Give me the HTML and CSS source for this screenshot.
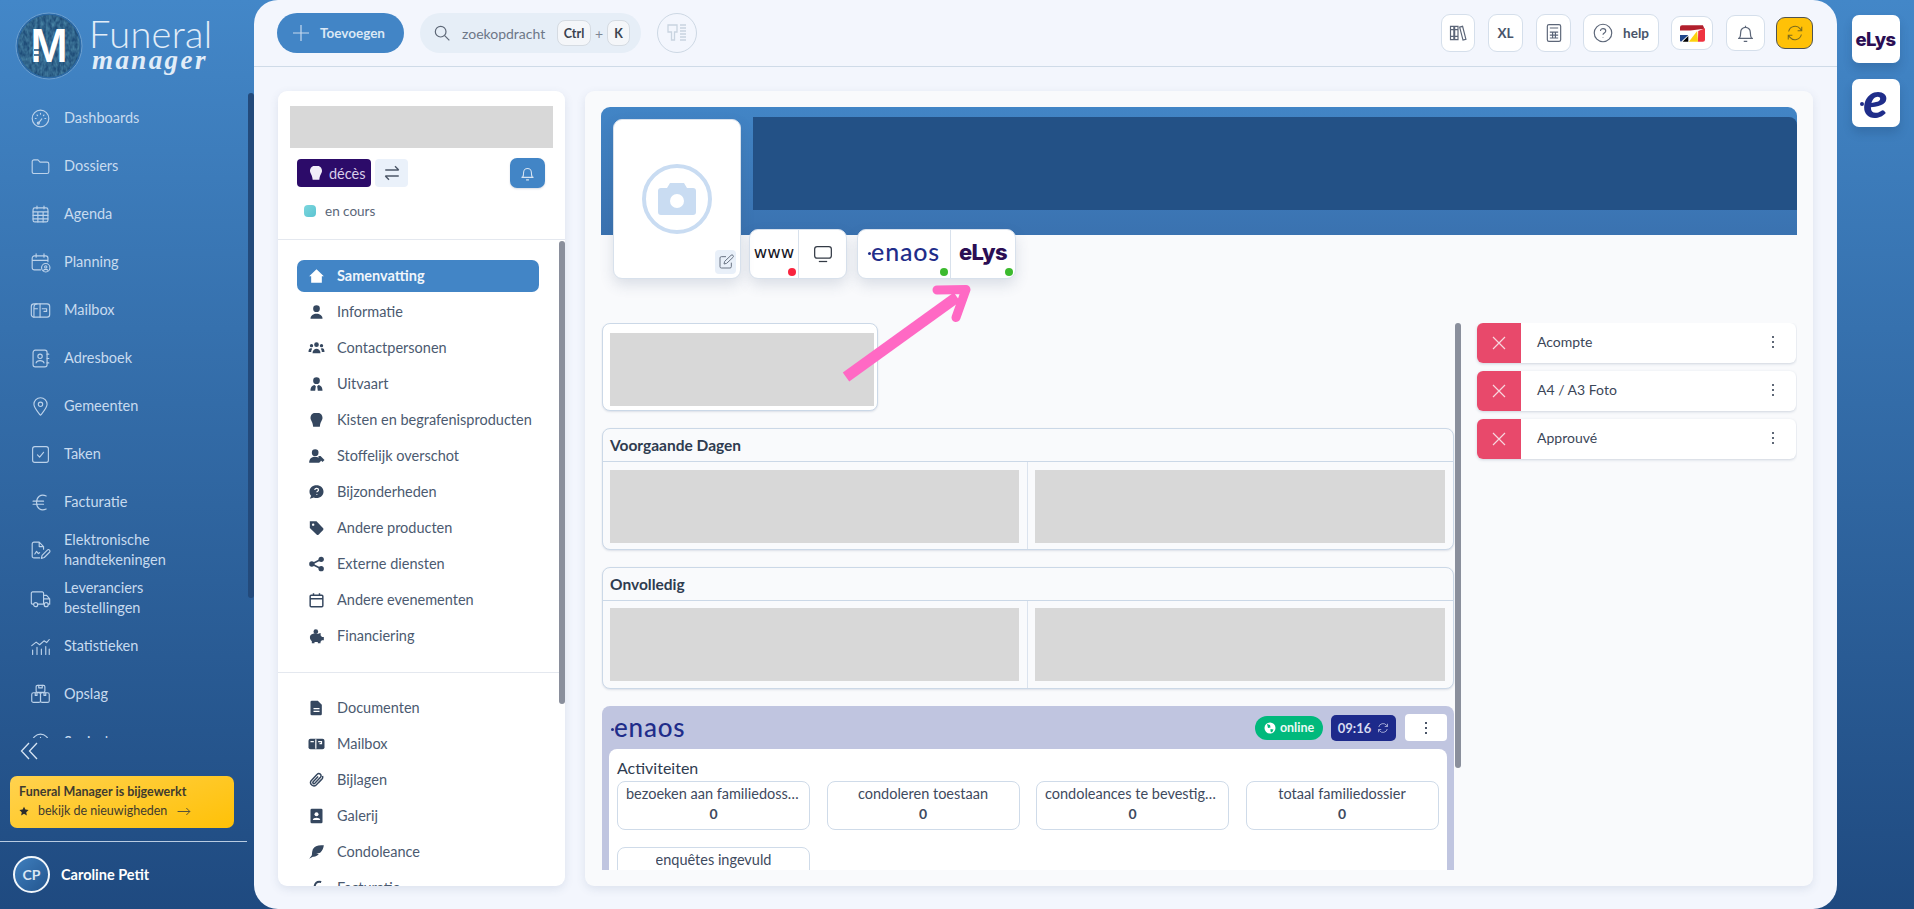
FILE: index.html
```html
<!DOCTYPE html>
<html lang="nl">
<head>
<meta charset="utf-8">
<title>Funeral Manager</title>
<link rel="stylesheet" href="styles.css">
</head>
<body>
<svg class="defs" width="0" height="0" aria-hidden="true">
  <filter id="grain" x="0" y="0" width="100%" height="100%"><feTurbulence type="fractalNoise" baseFrequency="0.35 0.2" numOctaves="2" seed="4"/><feColorMatrix values="0 0 0 0 .08  0 0 0 0 .27  0 0 0 0 .42  0 0 0 1.400 -.35"/></filter>
  <symbol id="s-dash" viewBox="0 0 24 24"><circle cx="12" cy="12" r="9.500"/><path d="M9.500 17.500l4-5M6 12h1M8 8l.7.7M12 6v1M16 8l-.7.7M18 12h-1"/><circle cx="9.500" cy="17.200" r="1.200"/></symbol>
  <symbol id="s-folder" viewBox="0 0 24 24"><path d="M2.500 6.500a2 2 0 012-2h4.600l2.400 2.500h8a2 2 0 012 2v9a2 2 0 01-2 2h-15a2 2 0 01-2-2z"/></symbol>
  <symbol id="s-cal" viewBox="0 0 24 24"><rect x="3.500" y="4.500" width="17" height="16" rx="2"/><path d="M8 2.500v3M16 2.500v3M3.500 9h17M3.500 13h17M3.500 17h17M9 9v11.500M15 9v11.500"/></symbol>
  <symbol id="s-plan" viewBox="0 0 24 24"><path d="M12 20.500H5a2.500 2.500 0 01-2.500-2.500V7A2.500 2.500 0 015 4.500h13A2.500 2.500 0 0120.500 7v4M2.500 9.500h18M7 2v4M16 2v4"/><circle cx="18" cy="18" r="4.800"/><circle cx="18" cy="17" r="1.300"/><path d="M15.500 21c.6-1.500 4.400-1.500 5 0"/></symbol>
  <symbol id="s-mail" viewBox="0 0 24 24"><rect x="1.500" y="4.500" width="21" height="15" rx="3"/><path d="M8 4.500c-3 0-3.500 2-3.500 4v11M11.500 4.500v15M4.500 10h4M14 10h5v3h-3"/></symbol>
  <symbol id="s-book" viewBox="0 0 24 24"><rect x="3.500" y="2.500" width="16" height="19" rx="2.500"/><circle cx="11.500" cy="9.500" r="2.500"/><path d="M7 17c.8-3.500 8.200-3.500 9 0M19.500 7h2M19.500 12h2M19.500 17h2"/></symbol>
  <symbol id="s-pin" viewBox="0 0 24 24"><path d="M12 22c-4-5-7.500-8.500-7.500-12.500a7.500 7.500 0 0115 0C19.500 13.500 16 17 12 22z"/><circle cx="12" cy="9.500" r="2.500"/></symbol>
  <symbol id="s-task" viewBox="0 0 24 24"><rect x="3" y="3" width="18" height="18" rx="2.500"/><path d="M8.500 12.500l2.500 2.500 4.500-5.500"/></symbol>
  <symbol id="s-euro" viewBox="0 0 24 24"><path d="M18.500 4.500C12 1.500 7.500 6 7.500 12s4.500 10.500 11 7.500M3.500 10.500h12M3.500 14h12"/></symbol>
  <symbol id="s-sign" viewBox="0 0 24 24"><path d="M11 20.500H4.500a2 2 0 01-2-2v-14a2 2 0 012-2h6l5 5v3M10.500 2.500v5h5M5.500 16l2-3 2 2.500 1.500-1"/><path d="M13 21l.8-3.500 6-6a1.500 1.500 0 012.500 2.500l-6 6z"/></symbol>
  <symbol id="s-truck" viewBox="0 0 24 24"><path d="M4 18.500H3a1.500 1.500 0 01-1.500-1.500V6A1.500 1.500 0 013 4.500h11a1.500 1.500 0 011.500 1.500v12.500M9 18.500h7M15.500 8.500H19l3.500 4v6H21M15.500 12.500h7"/><circle cx="6.500" cy="19" r="2.300"/><circle cx="18.500" cy="19" r="2.300"/></symbol>
  <symbol id="s-stat" viewBox="0 0 24 24"><path d="M2 11l5-4 4 3 5-4.500 3 2 3-3.500M3 21v-5M8 21v-8M13 21v-6M18 21v-9M22 21v-6"/></symbol>
  <symbol id="s-box" viewBox="0 0 24 24"><rect x="7" y="1.500" width="10" height="8" rx="1.500"/><path d="M10 1.500v3h4v-3"/><rect x="2" y="10" width="10" height="11" rx="2"/><rect x="12" y="10" width="10" height="11" rx="2"/><path d="M6 10v3h2v-3M16 10v3h2v-3"/></symbol>
  <symbol id="f-home" viewBox="0 0 24 24"><path d="M12 2L1 12.500h3V22h16v-9.500h3z"/></symbol>
  <symbol id="f-user" viewBox="0 0 24 24"><circle cx="12" cy="7" r="5"/><path d="M3 22c0-10 18-10 18 0z"/></symbol>
  <symbol id="f-users" viewBox="0 0 24 24"><circle cx="12" cy="7" r="3.500"/><circle cx="4.500" cy="8.500" r="2.500"/><circle cx="19.500" cy="8.500" r="2.500"/><path d="M6 20c0-9 12-9 12 0zM0 18c0-6 3-6 5.500-5-1 1.500-1.500 3-1.500 5zM24 18c0-6-3-6-5.500-5 1 1.500 1.500 3 1.500 5z"/></symbol>
  <symbol id="f-tie" viewBox="0 0 24 24"><circle cx="12" cy="7" r="5"/><path d="M3 22c0-6 3-8 6-8.500l2 2-1 6.500zM21 22c0-6-3-8-6-8.500l-2 2 1 6.500z"/></symbol>
  <symbol id="f-bulb" viewBox="0 0 24 24"><path d="M8 1.500h8c3 1 5 4 5 7 0 4-3 5-4 13.500H7C6 13.500 3 12.500 3 8.500c0-3 2-6 5-7z"/></symbol>
  <symbol id="f-usertag" viewBox="0 0 24 24"><circle cx="10" cy="7" r="5"/><path d="M1 22c0-9 9-10 13-8l5 5-3 3zM15 12h3l6 6-3 3-6-6z"/></symbol>
  <symbol id="f-chat" viewBox="0 0 24 24"><path d="M12 2c6 0 10.500 4 10.500 9.500S18 21 12 21c-1.500 0-3-.3-4-.8L2 22l2-4.500C2.500 16 1.500 14 1.500 11.500 1.500 6 6 2 12 2z"/><path d="M9.500 9c0-3.500 5.500-3 5.500 0 0 2-2.500 2-2.500 3.500M12.500 15v1" stroke="#fff" stroke-width="1.800" fill="none"/></symbol>
  <symbol id="f-tag" viewBox="0 0 24 24"><path d="M2 2h10l10 10.500a2 2 0 010 2.500l-7 7a2 2 0 01-2.500 0L2 12z"/><circle cx="7" cy="7" r="1.800" fill="#fff"/></symbol>
  <symbol id="f-share" viewBox="0 0 24 24"><circle cx="19" cy="5" r="4"/><circle cx="19" cy="19" r="4"/><circle cx="5" cy="12" r="4"/><path d="M19 5L5 12l14 7" fill="none" stroke="currentColor" stroke-width="2.500"/></symbol>
  <symbol id="f-cal" viewBox="0 0 24 24"><path d="M4 5h16a1.500 1.500 0 011.500 1.500v14A1.500 1.500 0 0120 22H4a1.500 1.500 0 01-1.500-1.500v-14A1.500 1.500 0 014 5zM2.500 10h19M7.500 2v4M16.500 2v4" fill="none" stroke="currentColor" stroke-width="2.200"/></symbol>
  <symbol id="f-piggy" viewBox="0 0 24 24"><circle cx="11" cy="5.500" r="3.500"/><path d="M3 11c2-3 8-3.500 11-2 2-1 3.500-1 4.500-1l-.5 3c1 .8 1.600 1.500 2 2.500H23v5h-3c-.5.800-1 1.300-2 2V23h-4v-2H9v2H5v-3C2.500 18 1 14 3 11z"/></symbol>
  <symbol id="f-doc" viewBox="0 0 24 24"><path d="M5 1h9l6 6v14a2 2 0 01-2 2H5a2 2 0 01-2-2V3a2 2 0 012-2z"/><path d="M7.500 13h9M7.500 17h9" stroke="#fff" stroke-width="2" fill="none"/></symbol>
  <symbol id="f-mail" viewBox="0 0 24 24"><path d="M7 4h14a3 3 0 013 3v10a3 3 0 01-3 3H3a3 3 0 01-3-3V7a3 3 0 013-3z"/><path d="M3 8.500h5M14.500 8.500h5v3h-3M11 5v14" stroke="#fff" stroke-width="1.800" fill="none"/></symbol>
  <symbol id="f-clip" viewBox="0 0 24 24"><path d="M19 11.500l-7.500 8a5 5 0 01-7.500-6.500L13 3.500a3.300 3.300 0 015 4.500l-8.500 9a1.700 1.700 0 01-2.500-2.300l7.500-8M21 6c1 3-1 5-1 5l-5 5" fill="none" stroke="currentColor" stroke-width="2.200"/></symbol>
  <symbol id="f-contact" viewBox="0 0 24 24"><path d="M5 1h14a2 2 0 012 2v18a2 2 0 01-2 2H5a2 2 0 01-2-2V3a2 2 0 012-2z"/><circle cx="12" cy="9.500" r="3" fill="#fff"/><path d="M6.500 18c0-4.500 11-4.500 11 0z" fill="#fff"/></symbol>
  <symbol id="f-feather" viewBox="0 0 24 24"><path d="M23 2c-8-1-14 1-16.500 6C5 12 5.500 15 5 17l-4 5 5.500-3c3 .5 6-.5 9-4l-4-.5 6-1.500C21 10 22.500 6 23 2z"/></symbol>
  <symbol id="f-f" viewBox="0 0 24 24"><path d="M19 3c-6-2-10 2-10 9v10M5 12h10" fill="none" stroke="currentColor" stroke-width="3"/></symbol>
</svg>

<aside class="sidebar">
  <div class="brand">
    <svg class="brand-mark" viewBox="0 0 68 68">
      <defs><clipPath id="brand-clip"><circle cx="34" cy="34" r="31"/></clipPath></defs>
      <circle cx="34" cy="34" r="33" fill="#2c6aa6" stroke="#6da0d0" stroke-width="1"/>
      <circle cx="34" cy="34" r="31" fill="#1f4d78"/>
      <rect width="68" height="68" filter="url(#grain)" clip-path="url(#brand-clip)"/>
      <text x="34" y="50" text-anchor="middle" textLength="37" lengthAdjust="spacingAndGlyphs" class="brand-letter">M</text>
      <path class="brand-cut" d="M19 38h7M19 43h5"/>
    </svg>
    <div class="brand-text">
      <span class="brand-top">Funeral</span>
      <span class="brand-bottom">manager</span>
    </div>
  </div>
  <nav class="side-nav">
    <a class="side-link"><svg class="side-ico"><use href="#s-dash"/></svg><span>Dashboards</span></a>
    <a class="side-link"><svg class="side-ico"><use href="#s-folder"/></svg><span>Dossiers</span></a>
    <a class="side-link"><svg class="side-ico"><use href="#s-cal"/></svg><span>Agenda</span></a>
    <a class="side-link"><svg class="side-ico"><use href="#s-plan"/></svg><span>Planning</span></a>
    <a class="side-link"><svg class="side-ico"><use href="#s-mail"/></svg><span>Mailbox</span></a>
    <a class="side-link"><svg class="side-ico"><use href="#s-book"/></svg><span>Adresboek</span></a>
    <a class="side-link"><svg class="side-ico"><use href="#s-pin"/></svg><span>Gemeenten</span></a>
    <a class="side-link"><svg class="side-ico"><use href="#s-task"/></svg><span>Taken</span></a>
    <a class="side-link"><svg class="side-ico"><use href="#s-euro"/></svg><span>Facturatie</span></a>
    <a class="side-link"><svg class="side-ico"><use href="#s-sign"/></svg><span>Elektronische handtekeningen</span></a>
    <a class="side-link"><svg class="side-ico"><use href="#s-truck"/></svg><span>Leveranciers bestellingen</span></a>
    <a class="side-link"><svg class="side-ico"><use href="#s-stat"/></svg><span>Statistieken</span></a>
    <a class="side-link"><svg class="side-ico"><use href="#s-box"/></svg><span>Opslag</span></a>
    <a class="side-link"><svg class="side-ico"><use href="#s-dash"/></svg><span>Sociaal</span></a>
  </nav>
  <div class="side-scroll"></div>
  <div class="collapse">
    <svg viewBox="0 0 20 20" width="20" height="20"><path d="M9 2L1.500 10 9 18M17 2L9.500 10 17 18"/></svg>
  </div>
  <div class="update">
    <strong>Funeral Manager is bijgewerkt</strong>
    <div class="update-link">
      <svg class="update-star" viewBox="0 0 24 24"><path d="M12 1.500l3.300 7 7.700 1-5.600 5.300 1.400 7.700-6.800-3.700-6.800 3.700 1.400-7.700L1 9.500l7.700-1z"/></svg>
      <span>bekijk de nieuwigheden</span>
      <svg class="update-arrow" viewBox="0 0 24 14"><path d="M1 7h21M16 1l6 6-6 6"/></svg>
    </div>
  </div>
  <div class="user">
    <div class="avatar">CP</div>
    <strong>Caroline Petit</strong>
  </div>
</aside>

<main class="panel">
  <header class="topbar">
    <div class="top-group">
      <button class="add-btn">
        <svg viewBox="0 0 16 16" width="16" height="16"><path d="M8 0v16M0 8h16"/></svg>
        <span>Toevoegen</span>
      </button>
      <div class="search">
        <svg viewBox="0 0 24 24" width="16" height="16"><circle cx="10" cy="10" r="8"/><path d="M16 16l7 7"/></svg>
        <span class="search-label">zoekopdracht</span>
        <kbd class="key key-ctrl">Ctrl</kbd>
        <span class="plus">+</span>
        <kbd class="key">K</kbd>
      </div>
      <div class="scan">
        <svg viewBox="0 0 24 24" width="24" height="24"><path d="M3 4h9v7H9.500v8h-3v-8H3zM15 4h6M15 7h6M15 10h6M15 13h6M15 16h6M15 19h6"/></svg>
      </div>
    </div>
    <div class="top-group top-right">
      <button class="tool tool-books"><svg viewBox="0 0 24 24" width="20" height="20"><path d="M3 4h4v16H3zM8 4h4v16H8zM14 5l3.500-1 4 15.500-3.500 1zM3 8h4M8 8h4M3 16h4M8 16h4"/></svg></button>
      <button class="tool tool-xl">XL</button>
      <button class="tool tool-calc"><svg viewBox="0 0 24 24" width="20" height="20"><rect x="4" y="2" width="16" height="20" rx="2"/><path d="M7 6h10M7 11h10M7 14.500h10M7 18h10M10.300 11v7M13.700 11v7"/></svg></button>
      <button class="tool tool-help"><svg viewBox="0 0 24 24" width="20" height="20"><circle cx="12" cy="12" r="10.500"/><path d="M9 9.500c0-4 6.300-3.500 6.300 0 0 2.500-3.300 2.300-3.300 4.500M12 17v.8"/></svg><span>help</span></button>
      <button class="tool tool-flag">
        <svg viewBox="0 0 24 16" width="25" height="17"><rect width="24" height="16" rx="2" fill="#fff"/><path d="M0 2a2 2 0 012-2h20l1.500 3.500L10 5H0z" fill="#b11f2c"/><path d="M17.500 5.500L24 3v11a2 2 0 01-2 2h-4.800z" fill="#ef3340"/><path d="M16.500 5.500l.8 10.500H8.500z" fill="#fdd20f"/><path d="M0 9.500h8L1 16a2 2 0 01-1-2z" fill="#21468b"/><path d="M2.500 16L8 10.500V16z" fill="#000"/></svg>
      </button>
      <button class="tool tool-bell"><svg viewBox="0 0 24 24" width="21" height="21"><path d="M5 17.500c1.500-2 1.500-4 1.500-7a5.500 5.500 0 0111 0c0 3 0 5 1.500 7zM3.500 17.500h17M10 21h4M12 5V3"/></svg></button>
      <button class="tool tool-sync"><svg viewBox="0 0 24 24" width="18" height="18"><path d="M3.500 10a8.800 8.800 0 0115.500-3.500l2 2.500M21 3.500V9h-5.500M20.500 14A8.800 8.800 0 015 17.500L3 15M3 20.500V15h5.500"/></svg></button>
    </div>
  </header>

  <div class="workspace">
    <section class="file-card">
      <div class="file-head">
        <div class="redact redact-title"></div>
        <div class="file-badges">
          <span class="badge-type"><svg viewBox="0 0 24 24" width="16" height="16"><use href="#f-bulb"/></svg>décès</span>
          <button class="swap"><svg viewBox="0 0 24 24" width="18" height="18"><path d="M3 8h18M16 3l5 5M21 16H3M8 21l-5-5"/></svg></button>
          <button class="bell-btn"><svg viewBox="0 0 24 24" width="17" height="17"><path d="M5 17.500c1.500-2 1.500-4 1.500-7a5.500 5.500 0 0111 0c0 3 0 5 1.500 7zM3.500 17.500h17M10 21h4"/></svg></button>
        </div>
        <div class="status"><i class="status-dot"></i><span>en cours</span></div>
      </div>
      <div class="file-nav">
        <div class="file-scroll"></div>
        <a class="file-link is-active"><svg class="file-ico"><use href="#f-home"/></svg><span>Samenvatting</span></a>
        <a class="file-link"><svg class="file-ico"><use href="#f-user"/></svg><span>Informatie</span></a>
        <a class="file-link"><svg class="file-ico file-ico-wide"><use href="#f-users"/></svg><span>Contactpersonen</span></a>
        <a class="file-link"><svg class="file-ico"><use href="#f-tie"/></svg><span>Uitvaart</span></a>
        <a class="file-link"><svg class="file-ico"><use href="#f-bulb"/></svg><span>Kisten en begrafenisproducten</span></a>
        <a class="file-link"><svg class="file-ico"><use href="#f-usertag"/></svg><span>Stoffelijk overschot</span></a>
        <a class="file-link"><svg class="file-ico"><use href="#f-chat"/></svg><span>Bijzonderheden</span></a>
        <a class="file-link"><svg class="file-ico"><use href="#f-tag"/></svg><span>Andere producten</span></a>
        <a class="file-link"><svg class="file-ico"><use href="#f-share"/></svg><span>Externe diensten</span></a>
        <a class="file-link"><svg class="file-ico"><use href="#f-cal"/></svg><span>Andere evenementen</span></a>
        <a class="file-link"><svg class="file-ico"><use href="#f-piggy"/></svg><span>Financiering</span></a>
        <hr class="file-sep">
        <a class="file-link"><svg class="file-ico"><use href="#f-doc"/></svg><span>Documenten</span></a>
        <a class="file-link"><svg class="file-ico"><use href="#f-mail"/></svg><span>Mailbox</span></a>
        <a class="file-link"><svg class="file-ico"><use href="#f-clip"/></svg><span>Bijlagen</span></a>
        <a class="file-link"><svg class="file-ico"><use href="#f-contact"/></svg><span>Galerij</span></a>
        <a class="file-link"><svg class="file-ico"><use href="#f-feather"/></svg><span>Condoleance</span></a>
        <a class="file-link"><svg class="file-ico"><use href="#f-f"/></svg><span>Facturatie</span></a>
      </div>
    </section>

    <section class="detail-card">
      <div class="hero">
        <div class="hero-fill"></div>
      </div>
      <div class="hero-row">
        <div class="photo">
          <svg class="photo-cam" viewBox="0 0 70 70" width="70" height="70">
            <circle cx="35" cy="35" r="33" fill="none" stroke="#c9dcf2" stroke-width="4"/>
            <path d="M19 24h6l3-5h14l3 5h6a3 3 0 013 3v21a3 3 0 01-3 3H19a3 3 0 01-3-3V27a3 3 0 013-3z" fill="#c9dcf2"/>
            <circle cx="35" cy="37" r="7" fill="#fff"/>
          </svg>
          <span class="photo-edit"><svg viewBox="0 0 24 24" width="16" height="16"><path d="M20 13v6a2 2 0 01-2 2H5a2 2 0 01-2-2V6a2 2 0 012-2h7M9 15l1-4 9.500-9a2 2 0 013 3L13 14z"/></svg></span>
        </div>
        <div class="quick quick-web">
          <div class="quick-cell cell-www"><span class="www">www</span><i class="dot dot-red"></i></div>
          <div class="quick-cell cell-screen"><svg viewBox="0 0 24 24" width="20" height="20"><rect x="2" y="3" width="20" height="14" rx="3"/><path d="M7 21h10"/></svg></div>
        </div>
        <div class="quick quick-apps">
          <div class="quick-cell cell-enaos"><span class="enaos-logo">enaos</span><i class="dot dot-green"></i></div>
          <div class="quick-cell cell-elys"><span class="elys-logo">eLys</span><i class="dot dot-green"></i></div>
        </div>
      </div>

      <div class="detail-body">
        <div class="detail-main">
          <div class="box box-small"><div class="redact redact-small"></div></div>
          <div class="box box-split box-first">
            <h3 class="box-title">Voorgaande Dagen</h3>
            <div class="split"><div class="split-cell"><div class="redact redact-cell"></div></div><div class="split-cell"><div class="redact redact-cell"></div></div></div>
          </div>
          <div class="box box-split">
            <h3 class="box-title">Onvolledig</h3>
            <div class="split"><div class="split-cell"><div class="redact redact-cell"></div></div><div class="split-cell"><div class="redact redact-cell"></div></div></div>
          </div>
          <div class="enaos-panel">
            <div class="enaos-head">
              <span class="enaos-logo enaos-logo-big">enaos</span>
              <span class="pill-online"><svg viewBox="0 0 24 24" width="12" height="12"><circle cx="12" cy="12" r="11" fill="#fff"/><path d="M6 4l6 2 1 5-5 1zM13 14l6 1-3 6-3-2z" fill="#00b97c"/></svg>online</span>
              <span class="pill-time">09:16<svg viewBox="0 0 24 24" width="12" height="12"><path d="M3.500 10a8.800 8.800 0 0115.500-3.500l2 2.500M21 3.500V9h-5.500M20.500 14A8.800 8.800 0 015 17.500L3 15M3 20.500V15h5.500"/></svg></span>
              <button class="enaos-more"><i></i><i></i><i></i></button>
            </div>
            <div class="enaos-body">
              <h4>Activiteiten</h4>
              <div class="stats">
                <div class="stat"><span class="stat-label">bezoeken aan familiedossiers</span><b>0</b></div>
                <div class="stat"><span class="stat-label">condoleren toestaan</span><b>0</b></div>
                <div class="stat"><span class="stat-label">condoleances te bevestigen</span><b>0</b></div>
                <div class="stat"><span class="stat-label">totaal familiedossier</span><b>0</b></div>
                <div class="stat"><span class="stat-label">enquêtes ingevuld</span><b>0</b></div>
              </div>
            </div>
          </div>
        </div>
        <div class="detail-scroll"></div>
        <div class="detail-side">
          <div class="flag-row"><span class="flag-x"><svg viewBox="0 0 16 16" width="16" height="16"><path d="M2 2l12 12M14 2L2 14"/></svg></span><span class="flag-name">Acompte</span><span class="kebab"><i></i><i></i><i></i></span></div>
          <div class="flag-row"><span class="flag-x"><svg viewBox="0 0 16 16" width="16" height="16"><path d="M2 2l12 12M14 2L2 14"/></svg></span><span class="flag-name">A4 / A3 Foto</span><span class="kebab"><i></i><i></i><i></i></span></div>
          <div class="flag-row"><span class="flag-x"><svg viewBox="0 0 16 16" width="16" height="16"><path d="M2 2l12 12M14 2L2 14"/></svg></span><span class="flag-name">Approuvé</span><span class="kebab"><i></i><i></i><i></i></span></div>
        </div>
      </div>

      <svg class="pointer" viewBox="0 0 140 105" width="140" height="105">
        <path class="pointer-shaft" d="M7 96L118 16"/>
        <path class="pointer-head" d="M98 9l29-.500-10 28"/>
      </svg>
    </section>
  </div>
</main>

<aside class="rail">
  <button class="rail-btn"><span class="elys-logo">eLys</span></button>
  <button class="rail-btn"><span class="rail-e">e</span></button>
</aside>
</body>
</html>
```

FILE: styles.css
```css
* { box-sizing: border-box; }
html, body { height: 100%; }
body {
  margin: 0;
  display: flex;
  height: 909px;
  overflow: hidden;
  background: linear-gradient(180deg, #4387c8 0%, #1f4a80 100%);
  font-family: "Lato", "Noto Sans", sans-serif;
  font-size: 14.5px;
  color: #3b4a63;
}
button { font: inherit; color: inherit; cursor: pointer; }
h3, h4 { margin: 0; }
.defs { position: absolute; }

/* sidebar */
.sidebar { position: relative; width: 254px; flex: none; display: flex; flex-direction: column; height: 909px; }
.brand { height: 93px; flex: none; display: flex; padding: 12px 0 0 15px; gap: 6px; }
.brand-mark { width: 68px; height: 68px; flex: none; }
.brand-letter { font: 600 45px "Inter", sans-serif; fill: #fff; }
.brand-cut { fill: none; stroke: #1f4d78; stroke-width: 1.500; }
.brand-text { display: flex; flex-direction: column; color: #e2edf8; }
.brand-top { font: 300 38px/34px "Lato", sans-serif; letter-spacing: .3px; margin-top: 4px; }
.brand-bottom { font: italic 700 27px/22px "Liberation Serif", serif; letter-spacing: 2.400px; margin: -1px 0 0 3px; }
.side-nav { flex: 1; min-height: 0; overflow: hidden; padding-top: 1px; }
.side-link { display: flex; align-items: center; height: 48px; padding-left: 30px; gap: 13px; color: #c8dbef; line-height: 20px; }
.side-link span { width: 120px; }
.side-ico { width: 21px; height: 21px; flex: none; fill: none; stroke: #bcd2ea; stroke-width: 1.300; stroke-linecap: round; stroke-linejoin: round; }
.side-scroll { position: absolute; left: 248px; top: 93px; width: 6px; height: 505px; border-radius: 3px; background: #234a7b; }
.collapse { height: 38px; flex: none; padding: 3px 0 0 20px; }
.collapse svg { fill: none; stroke: #d6e4f3; stroke-width: 1.300; }
.update { flex: none; width: 224px; height: 52px; margin: 0 0 13px 10px; padding: 7px 9px; border-radius: 7px; background: linear-gradient(160deg, #ffd24f 0%, #ffc107 100%); color: #3f3b2f; font-size: 12.500px; line-height: 18px; }
.update strong { display: block; font-weight: 700; white-space: nowrap; }
.update-link { display: flex; align-items: center; gap: 9px; font-size: 12.500px; line-height: 20px; }
.update-star { width: 10px; height: 10px; fill: #2c2c2c; }
.update-arrow { width: 14px; height: 9px; fill: none; stroke: #4c4a3c; stroke-width: 1.600; margin-left: 1px; }
.user { flex: none; width: 247px; height: 68px; display: flex; align-items: center; gap: 11px; padding: 0 0 2px 13px; border-top: 1px solid #b9cce2; color: #fff; }
.user strong { font-weight: 700; font-size: 14.500px; }
.avatar { width: 37px; height: 37px; border-radius: 50%; border: 2px solid #f1f6fb; background: linear-gradient(135deg, #3f7fbe, #23558e); display: flex; align-items: center; justify-content: center; font-weight: 700; font-size: 14px; color: #d9e6f3; }

/* main panel */
.panel { width: 1583px; flex: none; height: 909px; background: #f3f6fd; border-radius: 24px; display: flex; flex-direction: column; }
.topbar { height: 67px; flex: none; display: flex; justify-content: space-between; padding: 13px 24px 0 23px; border-bottom: 1px solid #cfdbe8; }
.top-group { display: flex; align-items: flex-start; }
.add-btn { width: 127px; height: 40px; border: 0; border-radius: 20px; background: #4285c6; color: #dbe8f5; display: flex; align-items: center; gap: 11px; padding: 0 0 0 16px; font-size: 13.500px; font-weight: 700; }
.add-btn svg { fill: none; stroke: #c5d9ee; stroke-width: 1.200; }
.search { width: 221px; height: 40px; margin-left: 16px; border-radius: 20px; background: #e6eef7; display: flex; align-items: center; padding-left: 14px; color: #6d7787; font-size: 14px; }
.search svg { fill: none; stroke: #5e6877; stroke-width: 1.800; }
.search-label { margin-left: 12px; width: 92px; white-space: nowrap; }
.key { height: 26px; min-width: 22px; padding: 0 6px; border: 1px solid #d5dbe2; border-radius: 8px; background: #f4f6f9; display: flex; align-items: center; justify-content: center; font: 700 12.500px "Lato", sans-serif; color: #39424f; }
.key-ctrl { width: 34px; margin-left: 3px; }
.plus { margin: 0 4px; color: #7d8795; }
.scan { width: 40px; height: 40px; margin-left: 16px; border: 1px solid #cdd8e4; border-radius: 50%; display: flex; align-items: center; justify-content: center; }
.scan svg { fill: none; stroke: #c9d4e0; stroke-width: 1.300; }
.top-right { margin-top: 1px; }
.tool { height: 38px; border: 1px solid #d5dfeb; border-radius: 9px; background: #fff; display: flex; align-items: center; justify-content: center; padding: 0; color: #48546a; font-weight: 700; font-size: 13.500px; }
.tool svg { fill: none; stroke: #5c6678; stroke-width: 1.400; }
.tool-books { width: 34px; }
.tool-xl { width: 35px; margin-left: 13px; }
.tool-calc { width: 35px; margin-left: 13px; }
.tool-help { width: 76px; margin-left: 12px; gap: 10px; }
.tool-flag { width: 42px; height: 34px; margin: 2px 0 0 12px; }
.tool-flag svg { stroke: none; }
.tool-bell { width: 39px; height: 36px; margin: 1px 0 0 13px; }
.tool-sync { width: 37px; height: 32px; margin: 3px 0 0 11px; background: #ffc107; border-color: #50534f; }
.tool-sync svg { stroke: #7a6a1e; }

.workspace { flex: 1; min-height: 0; display: flex; gap: 20px; padding: 24px 24px 23px 24px; }
.redact { background: #d8d8d8; }

/* left file card */
.file-card { width: 287px; flex: none; background: #fff; border-radius: 9px; box-shadow: 0 3px 10px rgba(60, 80, 120, .12); display: flex; flex-direction: column; overflow: hidden; }
.file-head { height: 149px; flex: none; padding: 15px 12px 0; border-bottom: 1px solid #e4e8ef; }
.redact-title { height: 42px; }
.file-badges { display: flex; align-items: center; padding: 0 8px 0 7px; margin-top: 10px; }
.badge-type { width: 74px; height: 28px; border-radius: 4px; background: #2c0b69; color: #d9cfea; display: flex; align-items: center; gap: 5px; padding-left: 11px; font-size: 14.500px; }
.badge-type svg { fill: #f2eef8; flex: none; }
.swap { width: 33px; height: 28px; margin-left: 4px; border: 0; border-radius: 4px; background: #eaf1fa; padding: 0; display: flex; align-items: center; justify-content: center; }
.swap svg { fill: none; stroke: #4c5768; stroke-width: 1.800; }
.bell-btn { width: 35px; height: 30px; margin-left: auto; border: 0; border-radius: 7px; background: #4285c6; padding: 0; display: flex; align-items: center; justify-content: center; box-shadow: 0 1px 2px rgba(60, 80, 120, .2); }
.bell-btn svg { fill: none; stroke: #d7e4f2; stroke-width: 1.500; }
.status { display: flex; align-items: center; gap: 9px; padding-left: 14px; margin-top: 15px; font-size: 13.500px; color: #5a6678; }
.status-dot { width: 12px; height: 12px; border-radius: 4px; background: linear-gradient(135deg, #7bd6dd, #5cc4d2); }
.file-nav { position: relative; flex: 1; min-height: 0; overflow: hidden; padding: 20px 26px 0 19px; }
.file-scroll { position: absolute; right: 0; top: 1px; width: 6px; height: 463px; border-radius: 3px; background: #8a8f9c; }
.file-link { display: flex; align-items: center; height: 32px; margin-bottom: 4px; padding-left: 8px; gap: 12px; border-radius: 7px; color: #4b5a70; white-space: nowrap; }
.file-link span { margin-bottom: 2px; }
.file-ico { width: 17px; height: 16px; margin: 0 0 0 3px; flex: none; fill: #35475f; color: #35475f; }
.file-ico-wide { width: 19px; margin: 0 -1px 0 2px; }
.file-link.is-active { background: #4285c6; color: #f0f5fb; font-weight: 700; }
.file-link.is-active .file-ico { fill: #fff; color: #fff; }
.file-sep { height: 1px; border: 0; background: #e4e8ef; margin: 20px -26px 19px -19px; }

/* right detail card */
.detail-card { position: relative; flex: 1; min-width: 0; background: #f9fafc; border-radius: 9px; box-shadow: 0 3px 10px rgba(60, 80, 120, .12); padding: 16px 16px 16px; display: flex; flex-direction: column; overflow: hidden; }
.hero { height: 128px; flex: none; padding: 10px 0 25px 152px; border-radius: 9px 9px 0 0; background: linear-gradient(180deg, #4285c6, #3a72b0); }
.hero-fill { height: 93px; background: #235186; border-radius: 0 8px 0 0; }
.hero-row { flex: none; display: flex; align-items: flex-start; margin: -116px 0 44px 12px; }
.photo { position: relative; width: 128px; height: 160px; border: 1px solid #d8e1ec; border-radius: 9px; background: #fff; box-shadow: 0 6px 14px rgba(60, 80, 120, .16); display: flex; justify-content: center; padding-top: 44px; }
.photo-edit { position: absolute; right: 4px; bottom: 4px; width: 21px; height: 24px; border-radius: 4px; background: #e9f0f9; display: flex; align-items: center; justify-content: center; }
.photo-edit svg { fill: none; stroke: #6a7484; stroke-width: 1.500; }
.quick { display: flex; height: 50px; margin-top: 110px; border: 1px solid #d8e1ec; border-radius: 9px; background: #fff; box-shadow: 0 6px 14px rgba(60, 80, 120, .16); }
.quick-web { width: 98px; margin-left: 8px; }
.quick-apps { width: 159px; margin-left: 10px; }
.quick-cell { position: relative; display: flex; align-items: center; justify-content: center; }
.quick-cell + .quick-cell { border-left: 1px solid #d8e1ec; }
.cell-www { width: 48px; }
.cell-screen { flex: 1; }
.cell-screen svg { fill: none; stroke: #333a45; stroke-width: 1.500; }
.cell-enaos { width: 92px; }
.cell-elys { flex: 1; }
.www { font: 400 16.500px "DejaVu Sans", sans-serif; color: #16161f; margin-top: -4px; }
.dot { position: absolute; right: 2px; bottom: 2px; width: 8px; height: 8px; border-radius: 50%; }
.dot-red { background: #f9243f; }
.dot-green { background: #3cba2e; }
.enaos-logo { font: 500 25px/1 "Lato", sans-serif; color: #1f2d8a; letter-spacing: .8px; margin-top: -5px; }
.enaos-logo::before { content: ""; display: inline-block; width: 3px; height: 3px; border-radius: 50%; background: #1f2d8a; vertical-align: 6px; margin-right: 0; }
.elys-logo { font: 800 22px/1 "Inter", sans-serif; color: #2b0e54; letter-spacing: -.6px; margin-top: -5px; }

.detail-body { position: relative; flex: 1; min-height: 0; display: flex; align-items: flex-start; overflow: hidden; }
.detail-main { width: 852px; margin-left: 1px; flex: none; display: flex; flex-direction: column; gap: 17px; }
.box { border: 1px solid #cbd8e7; border-radius: 8px; background: #fff; box-shadow: 0 1px 2px rgba(60, 80, 120, .15); }
.box-small { width: 276px; height: 88px; padding: 9px 3px 0 7px; }
.redact-small { height: 73px; }
.box-split { background: #f9fafc; }
.box-title { height: 33px; padding: 0 7px; border-bottom: 1px solid #cbd8e7; font: 700 15.500px/32px "Lato", sans-serif; color: #2f3c50; }
.split { display: flex; }
.split-cell { flex: 1; padding: 8px 8px 7px 7px; height: 87px; }
.split-cell:first-child { flex: none; width: 424px; }
.split-cell + .split-cell { border-left: 1px solid #dbe3ee; }
.redact-cell { height: 73px; }
.box-split:not(.box-first) .split-cell { padding-top: 7px; }

.enaos-panel { border-radius: 8px 8px 0 0; background: #c0c5e0; padding: 0 7px; }
.enaos-head { height: 43px; display: flex; align-items: center; gap: 8px; padding: 0 0 0 2px; }
.enaos-logo-big { margin: -2px auto 0 0; font-size: 26px; }
.pill-online { width: 68px; height: 24px; border-radius: 12px; background: #00b97c; color: #eafaf4; display: flex; align-items: center; justify-content: center; gap: 4px; font-size: 12.500px; font-weight: 700; }
.pill-time { width: 65px; height: 26px; border-radius: 5px; background: #1d2a8b; color: #d7dbf0; display: flex; align-items: center; justify-content: center; gap: 6px; font-size: 13px; font-weight: 700; }
.pill-time svg { fill: none; stroke: #c4c9e8; stroke-width: 1.500; }
.enaos-more { width: 42px; height: 27px; margin-left: 1px; border: 0; border-radius: 4px; background: #fff; display: flex; flex-direction: column; align-items: center; justify-content: center; gap: 3px; padding: 0; }
.enaos-more i { width: 2px; height: 2px; background: #4a5568; }
.enaos-body { background: #fff; border-radius: 8px 8px 0 0; padding: 10px 8px 20px; }
.enaos-body h4 { font: 400 16px/18px "Lato", sans-serif; color: #2f3c50; margin-bottom: 4px; }
.stats { display: grid; grid-template-columns: repeat(4, 193px); column-gap: 16.500px; row-gap: 17px; }
.stat { height: 49px; border: 1px solid #cfdbe9; border-radius: 8px; display: flex; flex-direction: column; align-items: center; padding: 2px 8px 0; color: #3e4a5e; line-height: 20px; font-size: 14.500px; }
.stat-label { max-width: 100%; overflow: hidden; text-overflow: ellipsis; white-space: nowrap; }
.stat b { font-weight: 700; font-size: 14px; }

.detail-scroll { width: 6px; height: 445px; flex: none; margin-left: 1px; border-radius: 3px; background: #8a8f9c; }
.detail-side { width: 319px; flex: none; margin-left: 16px; display: flex; flex-direction: column; gap: 8px; }
.flag-row { height: 40px; display: flex; align-items: center; border-radius: 6px; background: #fff; box-shadow: 0 1px 3px rgba(60, 80, 120, .22); overflow: hidden; color: #3b4658; }
.flag-x { width: 44px; height: 100%; flex: none; background: #e8496b; display: flex; align-items: center; justify-content: center; }
.flag-x svg { fill: none; stroke: #f7d7df; stroke-width: 1.200; }
.flag-name { flex: 1; padding: 0 0 3px 16px; font-size: 14px; }
.kebab { width: 2px; margin: 0 22px 2px 0; display: flex; flex-direction: column; gap: 3px; }
.kebab i { width: 2px; height: 2px; background: #5e6877; }

.pointer { position: absolute; left: 254px; top: 190px; }
.pointer-shaft, .pointer-head { fill: none; stroke: #ff69c4; }
.pointer-shaft { stroke-width: 11px; }
.pointer-head { stroke-width: 9px; stroke-linecap: round; stroke-linejoin: round; }

/* right rail */
.rail { flex: 1; display: flex; flex-direction: column; align-items: center; gap: 16px; padding-top: 15px; }
.rail-btn { width: 48px; height: 48px; border: 0; border-radius: 7px; background: #fff; padding: 0; display: flex; align-items: center; justify-content: center; box-shadow: 0 6px 10px rgba(20, 50, 90, .2); overflow: hidden; }
.rail-btn .elys-logo { font-size: 18.500px; margin: 0; }
.rail-e { position: relative; font: italic 900 50px/44px "Lato", sans-serif; color: #1f2d8a; margin-top: -8px; }
.rail-e::before { content: ""; position: absolute; left: -3px; top: 25px; width: 4px; height: 4px; border-radius: 50%; background: #1f2d8a; }
```
